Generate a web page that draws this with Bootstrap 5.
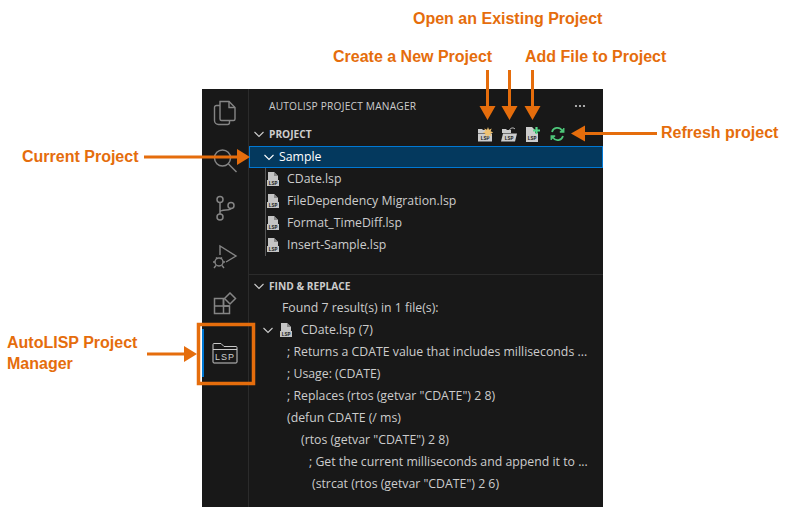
<!DOCTYPE html>
<html lang="en">
<head>
<meta charset="utf-8">
<title>AutoLISP Project Manager</title>
<link href="https://cdn.jsdelivr.net/npm/bootstrap@5.3.0/dist/css/bootstrap.min.css" rel="stylesheet">
<style>
html,body{height:507px;overflow:hidden;background:#fff;margin:0}
body{position:relative;font-family:"Open Sans","Noto Sans",sans-serif}
.vs-win{width:401px;height:418px;margin:89px 0 0 202px;background:#181818;color:#ccc;font-size:12.3px;line-height:22px}
.act-bar{width:47px;flex:none;border-right:1px solid #2b2b2b}
.act-item{height:48px;width:46px;position:relative;display:flex;align-items:center;justify-content:center}
.act-on::before{content:"";position:absolute;left:0;top:0;bottom:0;width:2px;background:#0078d4}
.side-pane{flex:1;min-width:0}
.pane-title{height:34px;padding:0 17px 0 20px;font-size:10.2px;letter-spacing:.02em}
.sec-head{height:22px;font-size:10.2px;font-weight:700;padding-left:4px;padding-right:38px}
.sec-head .sec-name{margin-left:4px}
.row-sel{height:22px;margin-top:1px;background:#04395e;border:1px solid #0078d4;color:#fff;padding-left:13px;gap:4px}
.tree-box{border-left:1px solid #555;margin-left:16px;padding-left:1px}
.tree-row{height:22px;gap:4px}
.sep-line{border-top:1px solid #2b2b2b;margin-top:18px;height:0}
.res-row{height:22px;white-space:pre}
.res-file{padding-left:13px;gap:6px}
.res-file .file-name{margin-left:3px}
.ind-a{padding-left:38px}.ind-b{padding-left:52px}.ind-c{padding-left:60px}.ind-d{padding-left:63px}.ind-f{padding-left:33px}
.call-text{position:absolute;color:#e56d0c;font:700 16px/20px "Liberation Sans",Arial,sans-serif;white-space:nowrap;margin:0}
.call-layer{position:absolute;left:0;top:0;width:788px;height:507px;pointer-events:none}
.lsp-text{font:700 5px "Liberation Mono",monospace;fill:#222}
.tbar-ico{gap:4px}
.nudge-up{margin-top:-3px}
.ico-gap-s{margin-left:3px}
.ico-gap-m{margin-left:6px}
</style>
</head>
<body>
<div class="vs-win d-flex">
  <div class="act-bar d-flex flex-column">
    <div class="act-item">
      <svg width="24" height="26" viewBox="0 0 24 26" fill="none" stroke="#858585" stroke-width="1.400"><path d="M7 1.500h9l6 6v11.500a1.500 1.500 0 0 1-1.500 1.500H8.500A1.500 1.500 0 0 1 7 19z"/><path d="M16 1.500v6h6"/><path d="M7 5.500H3.500A2 2 0 0 0 1.500 7.500v13A4 4 0 0 0 5.500 24.500h9a2 2 0 0 0 2-2v-2"/></svg>
    </div>
    <div class="act-item">
      <svg width="26" height="26" viewBox="0 0 26 26" fill="none" stroke="#858585" stroke-width="1.500"><circle cx="10.500" cy="10" r="8"/><path d="M16.500 16l8 8"/></svg>
    </div>
    <div class="act-item">
      <svg class="nudge-up" width="22" height="26" viewBox="0 0 22 26" fill="none" stroke="#858585" stroke-width="1.500"><circle cx="6" cy="4.500" r="3"/><circle cx="6" cy="22" r="3"/><circle cx="17" cy="10.500" r="3"/><path d="M6 7.500V19M6 17c0-3 11-1 11-3.500"/></svg>
    </div>
    <div class="act-item">
      <svg width="26" height="26" viewBox="0 0 26 26" fill="none" stroke="#858585" stroke-width="1.400"><path d="M8 11V2l16 10-10 6"/><circle cx="7" cy="18" r="4"/><path d="M4 13.500l1.500 1.500M10 13.500L8.500 15M1 18h2M11 18h2M2 24l2-2.500M12 24l-2-2.500"/></svg>
    </div>
    <div class="act-item">
      <svg class="nudge-up" width="24" height="24" viewBox="0 0 24 24" fill="none" stroke="#858585" stroke-width="1.500"><path d="M1.500 6.500h9v15h-9zM1.500 14h15v7.500h-6"/><path d="M10.500 6.500v7.500h6"/><path d="M17 1l5.500 5.500L17 12l-5.500-5.500z"/></svg>
    </div>
    <div class="act-item act-on">
      <svg width="26" height="22" viewBox="0 0 26 22" fill="none" stroke="#c8c8c8" stroke-width="1"><path d="M1 20V2.500A1 1 0 0 1 2 1.500h7l3 3h12a1 1 0 0 1 1 1V20a1 1 0 0 1-1 1H2a1 1 0 0 1-1-1z"/><path d="M1 7.500h24"/><text x="13" y="17.500" text-anchor="middle" font-family="Liberation Sans" font-size="9" letter-spacing="1" fill="#d0d0d0" stroke="none">LSP</text></svg>
    </div>
  </div>
  <div class="side-pane">
    <div class="pane-title d-flex align-items-center justify-content-between">
      <span>AUTOLISP PROJECT MANAGER</span>
      <svg width="12" height="4" viewBox="0 0 12 4" fill="#ccc"><circle cx="2" cy="2" r="1.100"/><circle cx="6" cy="2" r="1.100"/><circle cx="10" cy="2" r="1.100"/></svg>
    </div>
    <div class="sec-head d-flex align-items-center">
      <svg width="12" height="12" viewBox="0 0 12 12" fill="none" stroke="#ccc" stroke-width="1.100"><path d="M1.500 4l4.500 4.500L10.500 4"/></svg>
      <span class="sec-name flex-grow-1">PROJECT</span>
      <span class="tbar-ico d-flex align-items-center">
        <svg width="16" height="15" viewBox="0 0 16 15"><path d="M1 2h4l1 1h4v3H1z" fill="#ccc"/><rect x="1" y="6.500" width="14" height="8" fill="#ccc"/><text x="8" y="13" text-anchor="middle" class="lsp-text">LSP</text><path d="M11 0l1 2.800 2.700-1.200-1.100 2.700L16.300 5.500l-2.700 1.100 1.100 2.700-2.700-1.200-1 2.800-1-2.800-2.700 1.200 1.100-2.700L5.700 5.500l2.700-1.200-1.100-2.700L10 2.800z" fill="#efc272"/></svg>
        <svg class="ico-gap-s" width="18" height="15" viewBox="0 0 18 15"><path d="M2 2h4l1 1h4v3H2z" fill="#ccc"/><path d="M3 6.500h14l-2 8H1z" fill="#ccc"/><text x="9" y="13" text-anchor="middle" class="lsp-text">LSP</text><path d="M9 4c1-3 4-4 6-2" fill="none" stroke="#ccc"/></svg>
        <svg class="ico-gap-s" width="15" height="15" viewBox="0 0 15 15"><path d="M1 0h6l3 3v3h3v9H1z" fill="#ccc"/><text x="7" y="13" text-anchor="middle" class="lsp-text">LSP</text><path d="M11.500 0v7M8 3.500h7" stroke="#55d98a" stroke-width="2.200"/></svg>
        <svg class="ico-gap-m" width="15" height="14" viewBox="0 0 15 14" fill="none" stroke="#4ec77a" stroke-width="1.700"><path d="M2 5a5.500 5.500 0 0 1 10-1.500M13 9a5.500 5.500 0 0 1-10 1.500"/><path d="M13.800 1v4h-4M1.200 13V9h4" stroke-width="1.300" fill="#4ec77a"/></svg>
      </span>
    </div>
    <div class="row-sel d-flex align-items-center">
      <svg width="12" height="12" viewBox="0 0 12 12" fill="none" stroke="#fff" stroke-width="1.100"><path d="M1.500 4l4.500 4.500L10.500 4"/></svg>
      <span>Sample</span>
    </div>
    <div class="tree-box">
      <div class="tree-row d-flex align-items-center"><svg width="12" height="14" viewBox="0 0 12 14"><path d="M1 0h6l4 4v10H1z" fill="#c4c4c4"/><path d="M7 0v4h4" fill="#888"/><rect x="0" y="8" width="12" height="6" fill="#c4c4c4"/><text x="6" y="13" text-anchor="middle" class="lsp-text">LSP</text></svg><span class="ms-1">CDate.lsp</span></div>
      <div class="tree-row d-flex align-items-center"><svg width="12" height="14" viewBox="0 0 12 14"><path d="M1 0h6l4 4v10H1z" fill="#c4c4c4"/><path d="M7 0v4h4" fill="#888"/><rect x="0" y="8" width="12" height="6" fill="#c4c4c4"/><text x="6" y="13" text-anchor="middle" class="lsp-text">LSP</text></svg><span class="ms-1">FileDependency Migration.lsp</span></div>
      <div class="tree-row d-flex align-items-center"><svg width="12" height="14" viewBox="0 0 12 14"><path d="M1 0h6l4 4v10H1z" fill="#c4c4c4"/><path d="M7 0v4h4" fill="#888"/><rect x="0" y="8" width="12" height="6" fill="#c4c4c4"/><text x="6" y="13" text-anchor="middle" class="lsp-text">LSP</text></svg><span class="ms-1">Format_TimeDiff.lsp</span></div>
      <div class="tree-row d-flex align-items-center"><svg width="12" height="14" viewBox="0 0 12 14"><path d="M1 0h6l4 4v10H1z" fill="#c4c4c4"/><path d="M7 0v4h4" fill="#888"/><rect x="0" y="8" width="12" height="6" fill="#c4c4c4"/><text x="6" y="13" text-anchor="middle" class="lsp-text">LSP</text></svg><span class="ms-1">Insert-Sample.lsp</span></div>
    </div>
    <div class="sep-line"></div>
    <div class="sec-head d-flex align-items-center">
      <svg width="12" height="12" viewBox="0 0 12 12" fill="none" stroke="#ccc" stroke-width="1.100"><path d="M1.500 4l4.500 4.500L10.500 4"/></svg>
      <span class="sec-name">FIND &amp; REPLACE</span>
    </div>
    <div class="res-row ind-f">Found 7 result(s) in 1 file(s):</div>
    <div class="res-row res-file d-flex align-items-center">
      <svg width="12" height="12" viewBox="0 0 12 12" fill="none" stroke="#ccc" stroke-width="1.100"><path d="M1.500 4l4.500 4.500L10.500 4"/></svg>
      <svg width="12" height="14" viewBox="0 0 12 14"><path d="M1 0h6l4 4v10H1z" fill="#c4c4c4"/><path d="M7 0v4h4" fill="#888"/><rect x="0" y="8" width="12" height="6" fill="#c4c4c4"/><text x="6" y="13" text-anchor="middle" class="lsp-text">LSP</text></svg>
      <span class="file-name">CDate.lsp (7)</span>
    </div>
    <div class="res-row ind-a">; Returns a CDATE value that includes milliseconds ...</div>
    <div class="res-row ind-a">; Usage: (CDATE)</div>
    <div class="res-row ind-a">; Replaces (rtos (getvar "CDATE") 2 8)</div>
    <div class="res-row ind-a">(defun CDATE (/ ms)</div>
    <div class="res-row ind-b">(rtos (getvar "CDATE") 2 8)</div>
    <div class="res-row ind-c">; Get the current milliseconds and append it to ...</div>
    <div class="res-row ind-d">(strcat (rtos (getvar "CDATE") 2 6)</div>
  </div>
</div>

<svg class="call-layer" viewBox="0 0 788 507" fill="#e56d0c" stroke="none" aria-hidden="true">
  <rect x="198.500" y="324.500" width="55" height="59" fill="none" stroke="#e56d0c" stroke-width="3.500"/>
  <path d="M486 70h3v36h6.500l-8 14-8-14h6.500z"/>
  <path d="M508 70h3v36h6.500l-8 14-8-14h6.500z"/>
  <path d="M531 70h3v36h6.500l-8 14-8-14h6.500z"/>
  <path d="M657 132v3h-72v6.500l-14-8 14-8v6.500z"/>
  <path d="M144 155.500h93v-6.500l13 8-13 8v-6.500h-93z"/>
  <path d="M147 352.500h37v-6.500l13 8-13 8v-6.500h-37z"/>
</svg>
<p class="call-text" style="left:413px;top:9px">Open an Existing Project</p>
<p class="call-text" style="left:333px;top:47px">Create a New Project</p>
<p class="call-text" style="left:525px;top:47px">Add File to Project</p>
<p class="call-text" style="left:661px;top:123px">Refresh project</p>
<p class="call-text" style="left:22px;top:147px">Current Project</p>
<p class="call-text" style="left:7px;top:332px;line-height:21px">AutoLISP Project<br>Manager</p>
</body>
</html>
